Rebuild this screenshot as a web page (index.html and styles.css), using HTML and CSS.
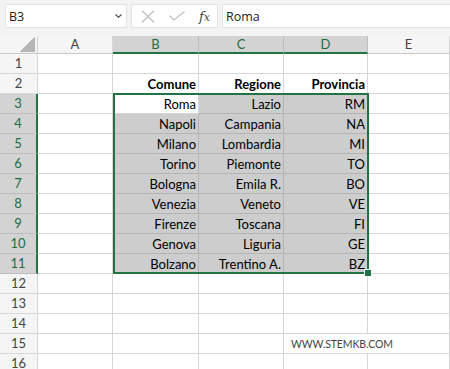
FILE: index.html
```html
<!DOCTYPE html>
<html lang="it">
<head>
    <meta charset="UTF-8">
    <meta name="viewport" content="width=device-width, initial-scale=1.0">
    <title>Foglio1</title>
    <link rel="stylesheet" href="styles.css">
</head>
<body>
    <div class="formula-bar">
        <div class="name-box">
            <span>B3</span>
            <svg class="chevron" width="7" height="4" viewBox="0 0 7 4"><path d="M0.5 0.5 L3.5 3.3 L6.5 0.5" fill="none" stroke="#444" stroke-width="1.1"/></svg>
        </div>
        <div class="fx-buttons">
            <svg width="14" height="13" viewBox="0 0 14 13"><path d="M1 0.5 L13 12.5 M13 0.5 L1 12.5" stroke="#bdbdbd" stroke-width="1.1" fill="none"/></svg>
            <svg width="16" height="10" viewBox="0 0 16 10"><path d="M0.5 4.5 L5 9 L15.5 0.5" stroke="#bdbdbd" stroke-width="1.1" fill="none"/></svg>
            <span class="fx">f<i>x</i></span>
        </div>
        <div class="formula-input">Roma</div>
    </div>

    <div class="sheet">
        <!-- intestazioni colonne -->
        <div class="hdr corner"></div>
        <div class="hdr">A</div>
        <div class="hdr on">B</div>
        <div class="hdr on">C</div>
        <div class="hdr on">D</div>
        <div class="hdr">E</div>

        <div class="rh">1</div><div class="c"></div><div class="c"></div><div class="c"></div><div class="c"></div><div class="c"></div>
        <div class="rh">2</div><div class="c"></div><div class="c b">Comune</div><div class="c b">Regione</div><div class="c b">Provincia</div><div class="c"></div>

        <div class="rh on">3</div><div class="c"></div><div class="c active">Roma</div><div class="c g">Lazio</div><div class="c g">RM</div><div class="c"></div>
        <div class="rh on">4</div><div class="c"></div><div class="c g">Napoli</div><div class="c g">Campania</div><div class="c g">NA</div><div class="c"></div>
        <div class="rh on">5</div><div class="c"></div><div class="c g">Milano</div><div class="c g">Lombardia</div><div class="c g">MI</div><div class="c"></div>
        <div class="rh on">6</div><div class="c"></div><div class="c g">Torino</div><div class="c g">Piemonte</div><div class="c g">TO</div><div class="c"></div>
        <div class="rh on">7</div><div class="c"></div><div class="c g">Bologna</div><div class="c g">Emila R.</div><div class="c g">BO</div><div class="c"></div>
        <div class="rh on">8</div><div class="c"></div><div class="c g">Venezia</div><div class="c g">Veneto</div><div class="c g">VE</div><div class="c"></div>
        <div class="rh on">9</div><div class="c"></div><div class="c g">Firenze</div><div class="c g">Toscana</div><div class="c g">FI</div><div class="c"></div>
        <div class="rh on">10</div><div class="c"></div><div class="c g">Genova</div><div class="c g">Liguria</div><div class="c g">GE</div><div class="c"></div>
        <div class="rh on">11</div><div class="c"></div><div class="c g">Bolzano</div><div class="c g">Trentino A.</div><div class="c g">BZ</div><div class="c"></div>

        <div class="rh">12</div><div class="c"></div><div class="c"></div><div class="c"></div><div class="c"></div><div class="c"></div>
        <div class="rh">13</div><div class="c"></div><div class="c"></div><div class="c"></div><div class="c"></div><div class="c"></div>
        <div class="rh">14</div><div class="c"></div><div class="c"></div><div class="c"></div><div class="c"></div><div class="c"></div>
        <div class="rh">15</div><div class="c"></div><div class="c"></div><div class="c"></div><div class="c wm"><span>WWW.STEMKB.COM</span></div><div class="c"></div>
        <div class="rh">16</div><div class="c"></div><div class="c"></div><div class="c"></div><div class="c"></div><div class="c"></div>

        <!-- bordo della selezione B3:D11 -->
        <div class="selection"><span class="handle"></span></div>
    </div>
</body>
</html>
```

FILE: styles.css
```css
body {
    margin: 0;
    font-family: Lato, "Open Sans", sans-serif;
    background-color: #fff;
    overflow: hidden;
}

/* barra della formula */
.formula-bar {
    display: flex;
    gap: 4px;
    height: 24px;
    padding: 4px 0 8px 5px;
    background-color: #f3f3f3;
    font-family: "Open Sans", sans-serif;
    font-size: 12.5px;
    color: #222;
}

.name-box, .fx-buttons, .formula-input {
    background-color: #fff;
    border: 1px solid #e3e3e3;
    box-sizing: border-box;
    height: 24px;
    display: flex;
    align-items: center;
}

.name-box {
    width: 122px;
    padding: 0 4px 0 3px;
    justify-content: space-between;
}

.fx-buttons {
    width: 87px;
    padding: 0 6px 0 9px;
    gap: 14px;
}

.fx {
    font-family: "DejaVu Serif", serif;
    font-style: italic;
    font-size: 13px;
    color: #444;
}

.fx i {
    font-size: 11px;
}

.formula-input {
    flex: 1;
    padding-left: 3px;
    border-right: none;
}

/* griglia del foglio */
.sheet {
    position: relative;
    display: grid;
    grid-template-columns: 38px 75px 86px 85px 84px 82px;
    grid-template-rows: 18px;
    grid-auto-rows: 20px;
    font-size: 13px;
}

.sheet > div {
    box-sizing: border-box;
    border-right: 1px solid #d6d6d6;
    border-bottom: 1px solid #d6d6d6;
}

.hdr {
    background-color: #f5f5f5;
    color: #444;
    text-align: center;
    line-height: 17px;
    border-bottom-color: #c8c8c8 !important;
}

.hdr.on {
    background-color: #d3d3d3;
    color: #1d6b40;
    border-right-color: #bcbcbc !important;
    border-bottom: 2px solid #217346 !important;
    line-height: 16px;
}

.corner {
    position: relative;
}

.corner::after {
    content: "";
    position: absolute;
    right: 2px;
    bottom: 1px;
    width: 15px;
    height: 15px;
    background: linear-gradient(to bottom right, transparent 50%, #b6b6b6 50%);
}

.rh {
    background-color: #f5f5f5;
    color: #444;
    text-align: center;
    line-height: 19px;
}

.rh.on {
    background-color: #d3d3d3;
    color: #1d6b40;
    border-right: 2px solid #217346 !important;
    border-bottom-color: #bcbcbc !important;
}

.c {
    text-align: right;
    padding-right: 2px;
    line-height: 20px;
    color: #000;
    white-space: nowrap;
}

.c.b {
    font-weight: bold;
}

.c.g {
    background-color: #cdcdcd;
    border-color: #b4b4b4;
}

.c.active {
    background-color: #fff;
}

.c.wm {
    position: relative;
    border-right: none;
}

.wm span {
    position: absolute;
    left: 7px;
    top: 0;
    font-size: 10.5px;
    letter-spacing: -0.1px;
    color: #444;
}

.selection {
    position: absolute;
    left: 113px;
    top: 57px;
    width: 256px;
    height: 181px;
    border: 2px solid #217346 !important;
    pointer-events: none;
}

.handle {
    position: absolute;
    right: -5px;
    bottom: -5px;
    width: 6px;
    height: 6px;
    background-color: #217346;
    border: 1px solid #fff;
}
```
